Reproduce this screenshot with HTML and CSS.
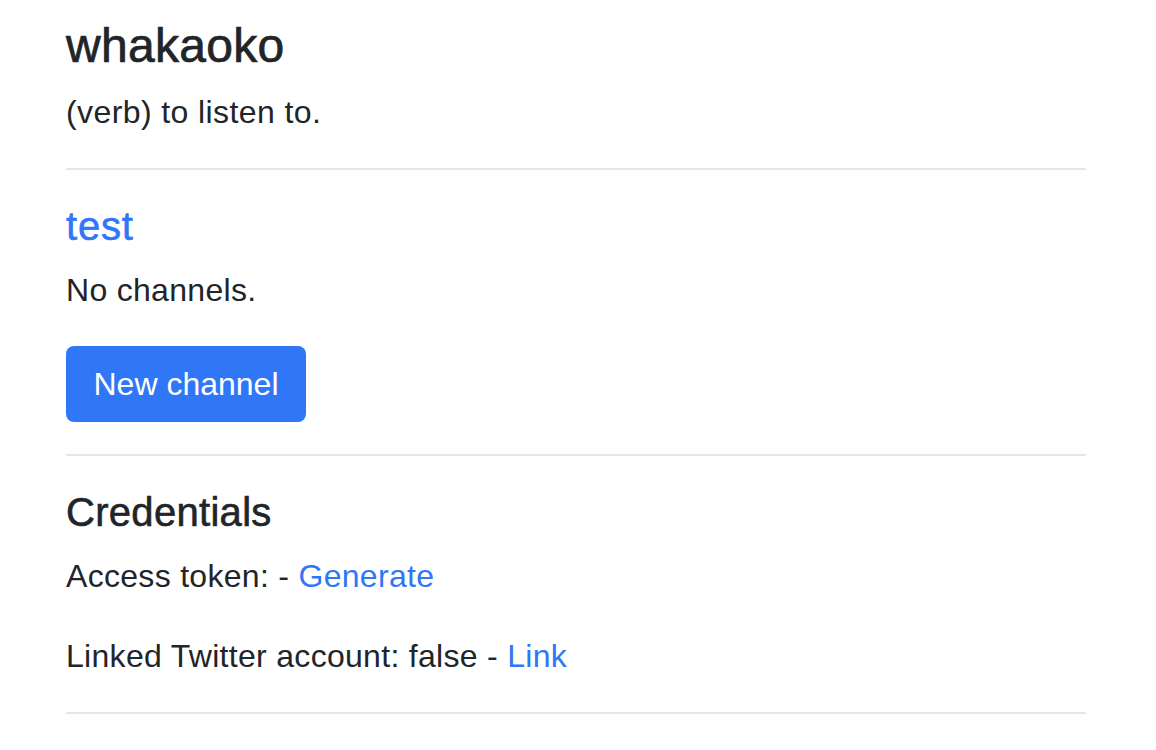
FILE: index.html
```html
<!DOCTYPE html>
<html lang="en">
<head>
<meta charset="utf-8">
<title>whakaoko</title>
<link rel="stylesheet" href="styles.css">
</head>
<body>
<main class="container">
  <h1 class="title">whakaoko</h1>
  <p class="tagline">(verb) to listen to.</p>
  <hr class="rule">
  <section class="feed">
    <h5 class="heading"><a class="link" href="#">test</a></h5>
    <p class="text">No channels.</p>
    <a class="btn" href="#">New channel</a>
  </section>
  <hr class="rule">
  <section class="creds">
    <h5 class="heading">Credentials</h5>
    <p class="text">Access token: - <a class="link" href="#">Generate</a></p>
    <p class="text">Linked Twitter account: false - <a class="link" href="#">Link</a></p>
  </section>
  <hr class="rule">
</main>
</body>
</html>
```
FILE: styles.css
```css
html, body {
  margin: 0;
  padding: 0;
  background: #ffffff;
}
body {
  font-family: "Liberation Sans", Arial, sans-serif;
  font-size: 32px;
  line-height: 48px;
  color: #212529;
}
.container {
  width: 1020px;
  margin: 0 0 0 66px;
  padding: 17px 0 0 0;
  display: block;
}
.title {
  font-size: 48px;
  line-height: 58px;
  font-weight: 500;
  letter-spacing: 0.3px;
  -webkit-text-stroke: 0.7px #212529;
  margin: 0 0 13px 0;
}
.tagline {
  margin: 0 0 32px 0;
  letter-spacing: 0.4px;
}
.rule {
  border: 0;
  border-top: 2px solid #e6e6e6;
  margin: 32px 0;
  height: 0;
}
.tagline + .rule { margin-top: 0; }
.heading {
  font-size: 40px;
  line-height: 48px;
  font-weight: 500;
  letter-spacing: 0.3px;
  -webkit-text-stroke: 0.6px currentColor;
  margin: 0 0 16px 0;
}
.text {
  margin: 0 0 32px 0;
  letter-spacing: 0.3px;
}
.link {
  color: #3077f7;
  text-decoration: none;
}
.heading .link {
  letter-spacing: 0.8px;
  -webkit-text-stroke: 0.6px #3077f7;
}
.btn {
  display: inline-block;
  box-sizing: border-box;
  width: 240px;
  height: 76px;
  line-height: 76px;
  text-align: center;
  background: #3077f7;
  color: #ffffff;
  border-radius: 8px;
  text-decoration: none;
  font-size: 32px;
  vertical-align: top;
}
.feed + .rule { margin-top: 32px; }
.creds + .rule { margin-top: 0; }
```
